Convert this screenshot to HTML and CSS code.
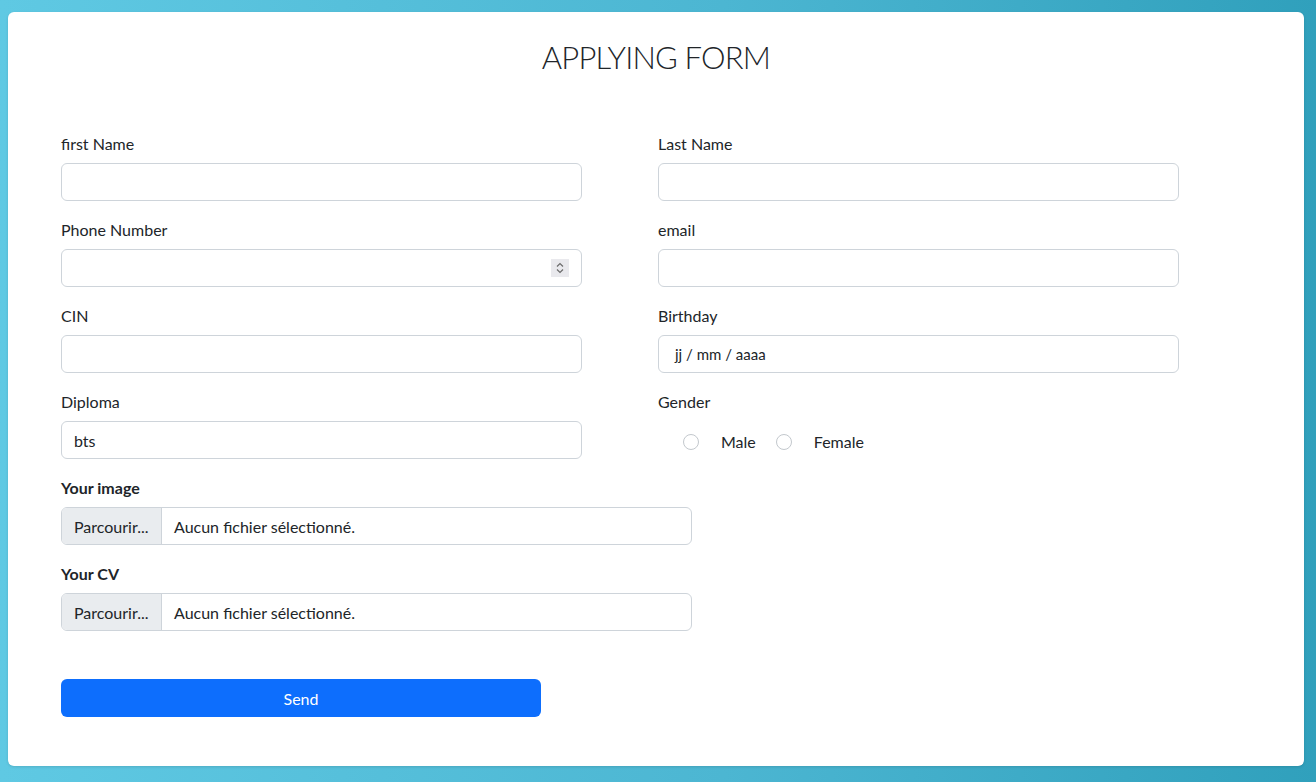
FILE: index.html
```html
<!DOCTYPE html>
<html lang="en">
<head>
<meta charset="utf-8">
<title>Applying Form</title>
<link rel="stylesheet" href="styles.css">
</head>
<body>
<main class="card">
  <h1 class="title">APPLYING FORM</h1>
  <form class="form">
    <div class="grid">
      <div class="group">
        <label class="label">first Name</label>
        <input class="control" type="text">
      </div>
      <div class="group">
        <label class="label">Last Name</label>
        <input class="control" type="text">
      </div>
      <div class="group">
        <label class="label">Phone Number</label>
        <div class="number-wrap">
          <input class="control" type="text">
          <span class="spinner">
            <svg width="10" height="14" viewBox="0 0 10 14"><path d="M2 5.5 L5 2.5 L8 5.5 M2 8.5 L5 11.5 L8 8.5" fill="none" stroke="#6b6b6b" stroke-width="1.2"/></svg>
          </span>
        </div>
      </div>
      <div class="group">
        <label class="label">email</label>
        <input class="control" type="text">
      </div>
      <div class="group">
        <label class="label">CIN</label>
        <input class="control" type="text">
      </div>
      <div class="group">
        <label class="label">Birthday</label>
        <div class="control date">jj / mm / aaaa</div>
      </div>
      <div class="group">
        <label class="label">Diploma</label>
        <input class="control" type="text" value="bts">
      </div>
      <div class="group">
        <label class="label">Gender</label>
        <div class="radios">
          <label class="radio"><span class="circle"></span><span>Male</span></label>
          <label class="radio"><span class="circle"></span><span>Female</span></label>
        </div>
      </div>
    </div>
    <div class="group file-group">
      <label class="label bold">Your image</label>
      <div class="file">
        <span class="file-btn">Parcourir...</span>
        <span class="file-name">Aucun fichier sélectionné.</span>
      </div>
    </div>
    <div class="group file-group">
      <label class="label bold">Your CV</label>
      <div class="file">
        <span class="file-btn">Parcourir...</span>
        <span class="file-name">Aucun fichier sélectionné.</span>
      </div>
    </div>
    <button class="send" type="button">Send</button>
  </form>
</main>
</body>
</html>
```
FILE: styles.css
```css
* { box-sizing: border-box; }
html, body { margin: 0; height: 100%; }
body {
  background: linear-gradient(90deg, #5fc9e3 0%, #4cb6d2 55%, #30a0bc 100%);
  font-family: "Lato", "Noto Sans", sans-serif;
  font-size: 16px;
  color: #212529;
  padding: 12px 12px 16px 8px;
}
.card {
  background: #fff;
  border-radius: 6px;
  height: 754px;
  padding: 24px 0 0 53px;
  box-shadow: 0 1px 3px rgba(0,0,0,0.12);
}
.title {
  margin: 0;
  text-align: center;
  font-weight: 300;
  font-size: 31px;
  line-height: 42px;
  letter-spacing: -0.8px;
  padding-right: 53px;
  color: #212529;
}
.form { margin-top: 54px; }
.grid {
  display: grid;
  grid-template-columns: 521px 521px;
  column-gap: 76px;
}
.group { margin-bottom: 17px; }
.label {
  display: block;
  line-height: 24px;
  margin-bottom: 7px;
}
.bold { font-weight: 700; }
.control {
  display: block;
  width: 100%;
  height: 38px;
  border: 1px solid #ced4da;
  border-radius: 6px;
  padding: 6px 12px;
  font: inherit;
  color: #212529;
  background: #fff;
  outline: none;
}
.date { line-height: 24px; font-size: 15px; padding-top: 6px; padding-left: 16px; }
.number-wrap { position: relative; }
.spinner {
  position: absolute;
  right: 13px;
  top: 10px;
  width: 18px;
  height: 18px;
  background: #e9e9ed;
  display: flex;
  align-items: center;
  justify-content: center;
}
.radios {
  display: flex;
  padding-left: 25px;
  padding-top: 9px;
  gap: 20px;
}
.radio {
  display: flex;
  align-items: center;
  gap: 22px;
  line-height: 24px;
}
.circle {
  width: 16px;
  height: 16px;
  border-radius: 50%;
  border: 1px solid #c3c8cd;
  background: #fff;
}
.file-group { width: 631px; }
.file {
  display: flex;
  height: 38px;
  border: 1px solid #ced4da;
  border-radius: 6px;
  overflow: hidden;
}
.file-btn {
  background: #e9ecef;
  width: 100px;
  border-right: 1px solid #ced4da;
  padding: 1px 0 0 12px;
  line-height: 35px;
  white-space: nowrap;
}
.file-name {
  padding: 1px 0 0 12px;
  line-height: 35px;
}
.send {
  display: block;
  margin-top: 48px;
  width: 480px;
  height: 38px;
  background: #0d6efd;
  color: #fff;
  border: 0;
  border-radius: 6px;
  font: inherit;
}
```
